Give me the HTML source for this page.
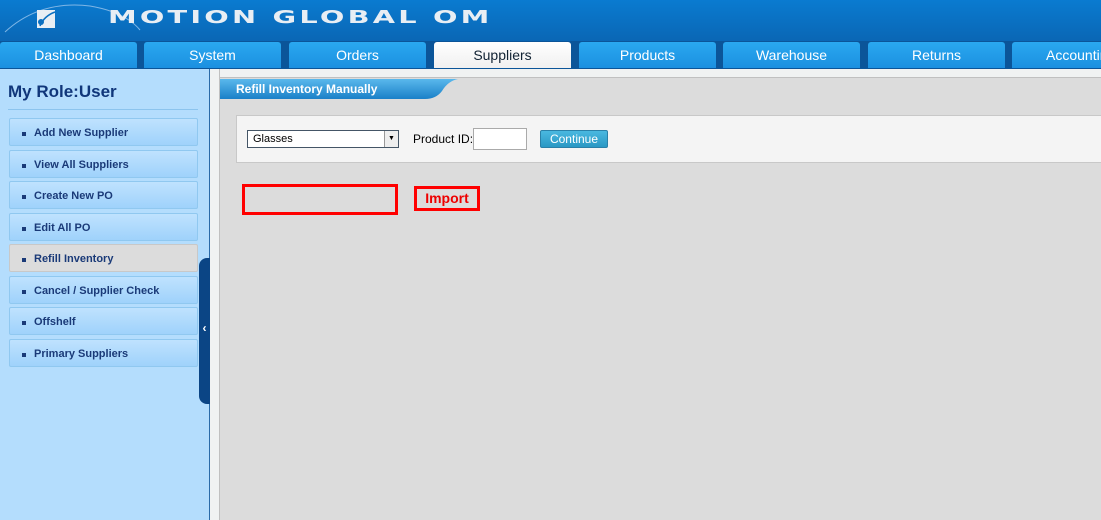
<!DOCTYPE html>
<html><head><style>
*{margin:0;padding:0;box-sizing:border-box}
body{width:1101px;height:520px;overflow:hidden;font-family:"Liberation Sans",Arial,sans-serif;background:#dcdcdc;position:relative}
.hdr{position:absolute;left:0;top:0;width:1101px;height:42px;background:linear-gradient(#0a7bd0,#0a66b4)}
.logo{position:absolute;left:108px;top:6px;color:#e8eef4;font-size:18px;font-weight:bold;letter-spacing:2px;font-family:"DejaVu Sans",sans-serif;line-height:24px;transform:scaleX(1.6);transform-origin:left top;white-space:nowrap}
.nav{position:absolute;left:0;top:41px;width:1101px;height:28px;background:#0b5599}
.tab{position:absolute;top:1px;height:26px;width:137px;background:linear-gradient(#2aa8f0,#1b90e0);color:#fff;font-size:14px;text-align:center;line-height:26px;border-radius:3px 3px 0 0}
.tab.on{background:linear-gradient(#fff,#f0f0f0);color:#123}
.side{position:absolute;left:0;top:69px;width:209px;height:451px;background:#b4ddfd}
.side h1{position:absolute;left:8px;top:13px;font-size:17px;color:#10367a;font-weight:bold}
.side .ln{position:absolute;left:8px;top:40px;width:190px;height:1px;background:#8cc4ee}
.it{position:absolute;left:9px;width:189px;height:28px;background:linear-gradient(#bfe2fe,#9fd2fb);border:1px solid #90c8f0;border-radius:2px;font-size:11px;font-weight:bold;color:#1a3a78;line-height:28px;padding-left:24px}
.it:before{content:"";position:absolute;left:12px;top:13px;width:4px;height:4px;background:#1a3a78}
.it.on{background:#dcdcdc;border-color:#c8c8c8}
.vl{position:absolute;left:209px;top:69px;width:1px;height:451px;background:#2a6aa8}
.strip{position:absolute;left:210px;top:69px;width:10px;height:451px;background:#f0f2f2;border-right:1px solid #c0c0c0}
.strip2{position:absolute;left:210px;top:69px;width:891px;height:9px;background:#f0f2f2;border-bottom:1px solid #c0c0c0}
.hand{position:absolute;left:199px;top:258px;width:11px;height:146px;background:#0b4585;border-radius:8px 0 0 8px;color:#fff;font-size:12px;font-weight:bold;line-height:140px;text-align:center}
.ttl{position:absolute;left:220px;top:79px;width:240px;height:20px}
.ttl span{position:absolute;left:16px;top:3px;color:#fff;font-size:12px;font-weight:bold}
.panel{position:absolute;left:236px;top:115px;width:870px;height:48px;background:#f4f4f4;border:1px solid #c8c8c8}
.sel{position:absolute;left:247px;top:130px;width:152px;height:18px;background:#fff;border:1px solid #456;font-size:11px;line-height:16px;padding-left:5px}
.sel b{position:absolute;right:0;top:0;width:14px;height:16px;background:#eee;border-left:1px solid #999;font-size:7px;text-align:center;line-height:16px;font-weight:normal}
.lab{position:absolute;left:413px;top:132px;font-size:12px}
.inp{position:absolute;left:473px;top:128px;width:54px;height:22px;background:#fff;border:1px solid #aaa}
.btn{position:absolute;left:540px;top:130px;width:68px;height:18px;background:linear-gradient(#4ab8e0,#2a98c4);border:1px solid #2a80a8;border-radius:2px;color:#fff;font-size:12px;text-align:center;line-height:16px}
.rb{position:absolute;left:242px;top:184px;width:156px;height:31px;border:3px solid #f00}
.imp{position:absolute;left:414px;top:186px;width:66px;height:25px;border:3px solid #f00;color:#e00;font-weight:bold;font-size:14px;text-align:center;line-height:19px}
</style></head><body>
<div class="hdr">
<svg width="260" height="42" style="position:absolute;left:0;top:0"><path d="M5 32 Q40 0 90 6 Q125 12 140 30" stroke="#7fb6e6" stroke-width="1" fill="none"/><rect x="37" y="10" width="18" height="18" fill="#e8eef4"/><circle cx="41" cy="22" r="3" fill="#0a6fc0"/><path d="M40 26 Q44 16 55 12" stroke="#0a6fc0" stroke-width="1.5" fill="none"/></svg>
<div class="logo">MOTION GLOBAL OM</div>
</div>
<div class="nav">
<div class="tab" style="left:0">Dashboard</div>
<div class="tab" style="left:144px">System</div>
<div class="tab" style="left:289px">Orders</div>
<div class="tab on" style="left:434px">Suppliers</div>
<div class="tab" style="left:579px">Products</div>
<div class="tab" style="left:723px">Warehouse</div>
<div class="tab" style="left:868px">Returns</div>
<div class="tab" style="left:1012px;text-align:left;padding-left:34px;width:100px">Accounting</div>
</div>
<div class="side"><h1>My Role:User</h1><div class="ln"></div></div>
<div class="it" style="top:118px">Add New Supplier</div>
<div class="it" style="top:150px">View All Suppliers</div>
<div class="it" style="top:181px">Create New PO</div>
<div class="it" style="top:213px">Edit All PO</div>
<div class="it on" style="top:244px">Refill Inventory</div>
<div class="it" style="top:276px">Cancel / Supplier Check</div>
<div class="it" style="top:307px">Offshelf</div>
<div class="it" style="top:339px">Primary Suppliers</div>
<div class="strip2"></div>
<div class="strip"></div>
<div class="vl"></div>
<div class="hand">&lsaquo;</div>
<div class="ttl"><svg width="240" height="20" style="position:absolute;left:0;top:0"><defs><linearGradient id="g" x1="0" y1="0" x2="0" y2="1"><stop offset="0" stop-color="#5ab8ec"/><stop offset="1" stop-color="#1a80c8"/></linearGradient></defs><path d="M0 0 H238 Q228 2 222 12 Q216 20 205 20 H0Z" fill="url(#g)"/></svg><span>Refill Inventory Manually</span></div>
<div class="panel"></div>
<div class="sel">Glasses<b>▼</b></div>
<div class="lab">Product ID:</div>
<div class="inp"></div>
<div class="btn">Continue</div>
<div class="rb"></div>
<div class="imp">Import</div>
</body></html>
